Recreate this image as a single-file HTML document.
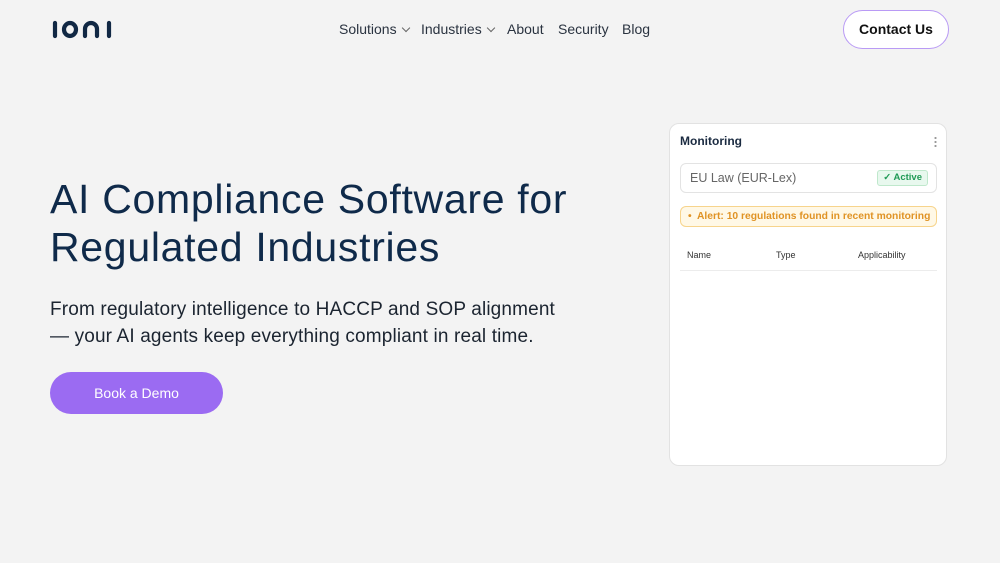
<!DOCTYPE html>
<html><head><meta charset="utf-8"><style>
*{margin:0;padding:0;box-sizing:border-box}
body{width:1000px;height:563px;background:#f3f3f3;font-family:"Liberation Sans",sans-serif;position:relative;overflow:hidden;color:#0f2744}
.nav{position:absolute;top:21px;font-size:14px;color:#2a3340}
.nav span{position:absolute;white-space:nowrap}
.chev{display:inline-block;width:6px;height:6px;border-right:1px solid #666;border-bottom:1px solid #666;transform:rotate(45deg);margin-left:6px;position:relative;top:-3px}
.contact{position:absolute;left:843px;top:10px;width:106px;height:39px;border:1.5px solid #b99af5;border-radius:20px;background:#fff;font-size:14px;font-weight:bold;color:#111;text-align:center;line-height:36px}
h1{position:absolute;left:50px;top:175px;font-size:41px;font-weight:normal;line-height:48px;color:#0f2a4a;letter-spacing:0.7px;white-space:nowrap}
.sub{position:absolute;left:50px;top:296px;font-size:19px;line-height:27px;color:#1b2430;letter-spacing:0.15px;white-space:nowrap}
.btn{position:absolute;left:50px;top:372px;width:173px;height:42px;border-radius:21px;background:#9b6bf2;color:#fff;font-size:14px;text-align:center;line-height:42px}
.card{position:absolute;left:669px;top:123px;width:278px;height:343px;background:#fff;border:1px solid #e2e2e2;border-radius:10px}
</style></head><body>
<svg style="position:absolute;left:50px;top:18px" width="66" height="24" viewBox="0 0 66 24">
<g fill="none" stroke="#112844" stroke-width="4.2" stroke-linecap="round">
<line x1="5" y1="5" x2="5" y2="18"/>
<ellipse cx="20" cy="11.5" rx="6" ry="6.5"/>
<path d="M35 18 V11 a6 6 0 0 1 12 0 V18"/>
<line x1="59" y1="5" x2="59" y2="18"/>
</g></svg>
<div class="nav">
<span style="left:339px">Solutions<i class="chev"></i></span>
<span style="left:421px">Industries<i class="chev"></i></span>
<span style="left:507px">About</span>
<span style="left:558px">Security</span>
<span style="left:622px">Blog</span>
</div>
<div class="contact">Contact Us</div>
<h1>AI Compliance Software for<br>Regulated Industries</h1>
<div class="sub">From regulatory intelligence to HACCP and SOP alignment<br>— your AI agents keep everything compliant in real time.</div>
<div class="btn">Book a Demo</div>
<div class="card">
<div style="position:absolute;left:10px;top:10px;font-size:12px;font-weight:bold;color:#1a2a40">Monitoring</div>
<div style="position:absolute;left:264px;top:12px;width:3px;height:12px;background:radial-gradient(circle,#999 1px,transparent 1.2px) 0 0/3px 4px"></div>
<div style="position:absolute;left:10px;top:39px;width:257px;height:30px;border:1px solid #e3e3e3;border-radius:6px">
<span style="position:absolute;left:9px;top:7px;font-size:12.5px;color:#666">EU Law (EUR-Lex)</span>
<span style="position:absolute;right:8px;top:6px;height:16px;padding:0 5px;background:#e8f8ee;border:1px solid #bfe8cc;border-radius:3px;font-size:9.5px;color:#1f9a55;line-height:14px;font-weight:bold">✓ Active</span>
</div>
<div style="position:absolute;left:10px;top:82px;width:257px;height:21px;border:1px solid #f7d48c;background:#fff8e6;border-radius:6px;font-size:10.3px;color:#e09325;font-weight:bold;line-height:19px;padding-left:7px;white-space:nowrap">•&nbsp; Alert: 10 regulations found in recent monitoring</div>
<div style="position:absolute;left:17px;top:126px;font-size:9px;color:#333">Name</div>
<div style="position:absolute;left:106px;top:126px;font-size:9px;color:#333">Type</div>
<div style="position:absolute;left:188px;top:126px;font-size:9px;color:#333">Applicability</div>
<div style="position:absolute;left:10px;top:146px;width:257px;height:1px;background:#ececec"></div>
</div>
</body></html>
